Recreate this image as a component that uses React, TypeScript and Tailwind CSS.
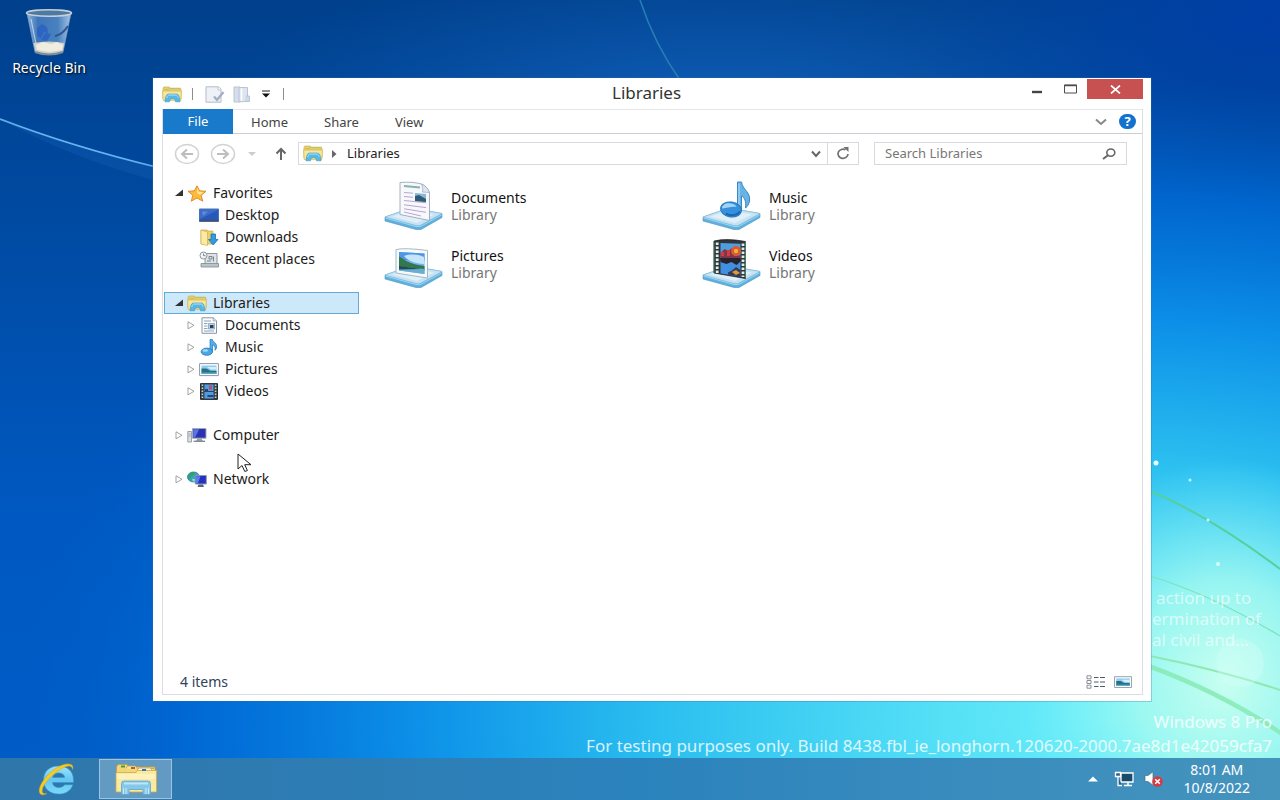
import React from 'react';

type IconProps = { className?: string };

interface TreeItem {
  label: string;
  icon: React.FC<IconProps>;
  level: 0 | 1;
  state: 'open' | 'closed' | 'none';
  selected?: boolean;
  spaced?: boolean;
}

interface LibraryItem {
  label: string;
  icon: React.FC<IconProps>;
}

/* ---------- Small icons ---------- */

const ExplorerIcon: React.FC<IconProps> = ({ className }) => (
  <svg viewBox="0 0 20 17" className={className} aria-hidden="true">
    <path d="M1 2.5 1.8 1h5.4l1 1.2h10.3l.5 1V13H1z" fill="#e9cf6e" stroke="#cfae4a" strokeWidth=".7" />
    <path d="M2.5 3.6h4l.8-1h10.6" fill="none" stroke="#b9c26a" strokeWidth="1" />
    <path d="M.6 5h18.8l-.6 9.6H1.2z" fill="#f8e79a" stroke="#d3b552" strokeWidth=".7" />
    <path d="M3 15.800c.3-5.200 1.600-7.800 3.600-7.800h7.800c2 0 3.300 2.600 3.600 7.800h-4.400c-.2-2-1-3-3.100-3s-2.900 1-3.100 3z" fill="#56b8e4" stroke="#3a95c6" strokeWidth=".6" />
    <path d="M4.800 12c.5-2.100 1.200-3 2.200-3h7c1 0 1.700.9 2.100 2.700" fill="none" stroke="#b5e4f7" strokeWidth="1" />
  </svg>
);

const PropertiesIcon: React.FC<IconProps> = ({ className }) => (
  <svg viewBox="0 0 20 17" className={className} aria-hidden="true">
    <path d="M1 .8h12.500l2.500 2.400v13H1z" fill="#eef1f7" stroke="#b3bccb" />
    <path d="M13 1v3h3" fill="#fff" stroke="#b3bccb" strokeWidth=".8" />
    <path d="m9 10.500 3 3.500 6.500-8" fill="none" stroke="#a4b0c2" strokeWidth="2.400" />
  </svg>
);

const NewFolderIcon: React.FC<IconProps> = ({ className }) => (
  <svg viewBox="0 0 18 17" className={className} aria-hidden="true">
    <path d="M1 1h6v15H1z" fill="#d5deea" stroke="#b9c5d4" />
    <path d="M6 1.500h8.500V15L6 16z" fill="#dde5ef" stroke="#b9c5d4" />
    <path d="M8.500 2.500v12" stroke="#fff" strokeWidth="1.500" />
    <path d="M13 10h3.500v5.500H12" fill="#cfd9e6" stroke="#b0bdce" strokeWidth=".8" />
  </svg>
);

const StarIcon: React.FC<IconProps> = ({ className }) => (
  <svg viewBox="0 0 20 17" className={className} aria-hidden="true">
    <path d="m10 .8 2.600 5 6.400.5-4.800 4 1.600 5.900L10 13l-5.800 3.200 1.600-5.900L1 6.300l6.400-.5z" fill="#fcb93c" stroke="#dc8628" strokeWidth=".9" />
    <path d="m10 2.500 1.800 4.200 4.700.4-3.500 2.900L10 8z" fill="#ffe48a" />
  </svg>
);

const DesktopIcon: React.FC<IconProps> = ({ className }) => (
  <svg viewBox="0 0 20 17" className={className} aria-hidden="true">
    <path d="M.5 2h19v12.500H.5z" fill="#3d6cc9" stroke="#4a72b4" />
    <path d="M1 12 19 3v10H1z" fill="#2858b8" />
    <path d="M3 4.500h6L4 9z" fill="#5c8ae0" />
    <path d="M.5 13.500h19" stroke="#454f66" strokeWidth="1.500" />
  </svg>
);

const DownloadsIcon: React.FC<IconProps> = ({ className }) => (
  <svg viewBox="0 0 20 17" className={className} aria-hidden="true">
    <path d="M2 1h6l1 1h5v13H2z" fill="#ecd06c" stroke="#caa848" strokeWidth=".7" />
    <path d="m2 1 6.500 2v13.500L2 15z" fill="#faeaa4" stroke="#d0b050" strokeWidth=".7" />
    <path d="M12 5h4.500v5.500H19l-4.800 5.500-4.700-5.500H12z" fill="#2f9be0" stroke="#1873b4" strokeWidth=".8" />
  </svg>
);

const RecentIcon: React.FC<IconProps> = ({ className }) => (
  <svg viewBox="0 0 20 17" className={className} aria-hidden="true">
    <path d="M4 2.500h14v11H6V7z" fill="#dde3e6" stroke="#8b969c" />
    <path d="M2 12.500h17.500v3.500H2z" fill="#b9c3c8" stroke="#7f8b91" strokeWidth=".8" />
    <circle cx="4.500" cy="4.500" r="3.500" fill="#f4f7f8" stroke="#8b969c" />
    <path d="M4.500 2.500v2.200h2M10 5.500h3v2.500h-3zm4.500 0v5M8 10h4" fill="none" stroke="#76848b" />
  </svg>
);

const DocumentIcon: React.FC<IconProps> = ({ className }) => (
  <svg viewBox="0 0 20 17" className={className} aria-hidden="true">
    <path d="M3 .8h11.500L17.500 4v12.300H3z" fill="#fbfcfe" stroke="#8896a5" />
    <path d="M14.200.8V4h3.300" fill="#dbe4ee" stroke="#8896a5" strokeWidth=".7" />
    <path d="M5 4h7M5 6.500h3.500M5 9h3.500M5 11.500h3.500M5 14h10" stroke="#8ba4ba" />
    <path d="M9.500 6.500h6V12h-6z" fill="#b8cfe4" stroke="#6f8ba5" strokeWidth=".6" />
    <path d="M11 8h3.500v3H11z" fill="#24415f" />
  </svg>
);

const NoteIcon: React.FC<IconProps> = ({ className }) => (
  <svg viewBox="0 0 20 17" className={className} aria-hidden="true">
    <path d="M11 .5h2.500c.3 2.600 5 3.500 4 8.500-.2 1-.8 1.800-1.600 2.300.8-3-.3-4.600-2.400-5.500v7H11z" fill="#53afe8" stroke="#2479b8" strokeWidth=".7" />
    <ellipse cx="7.800" cy="12.700" rx="5.700" ry="3.600" fill="#49a7e6" stroke="#2274b4" strokeWidth=".8" />
    <ellipse cx="6.300" cy="11.500" rx="2.800" ry="1.300" fill="#a0daf8" />
  </svg>
);

const PictureIcon: React.FC<IconProps> = ({ className }) => (
  <svg viewBox="0 0 20 17" className={className} aria-hidden="true">
    <path d="M.6 2.600h18.800v12H.6z" fill="#fff" stroke="#8b99a5" />
    <path d="M2.500 4.500h15v8.200h-15z" fill="#8ccdf0" />
    <path d="M2.500 7.500h5l4 2.200h6v3h-15z" fill="#2b6f86" />
    <path d="M8 6h9.500v2.500H12z" fill="#d6effa" />
    <path d="M2.500 11.500h15v1.300h-15z" fill="#5fb0cc" />
  </svg>
);

const FilmIcon: React.FC<IconProps> = ({ className }) => (
  <svg viewBox="0 0 20 17" className={className} aria-hidden="true">
    <path d="M1.500.6h17v15.800h-17z" fill="#3a4149" stroke="#252a30" />
    <path d="M5.500 1.500h9v6.500h-9zM5.500 9h9v6.500h-9z" fill="#4f9be4" />
    <path d="M10 2.500h3v4h-3z" fill="#b8506a" />
    <path d="M6 6h3v2H6zM8.500 12h6v2h-6z" fill="#27437f" />
    <path d="M3.400 1.500v14M16.600 1.500v14" stroke="#b9d2c8" strokeWidth="1.600" strokeDasharray="1.500 1.500" />
  </svg>
);

const ComputerIcon: React.FC<IconProps> = ({ className }) => (
  <svg viewBox="0 0 20 17" className={className} aria-hidden="true">
    <path d="M.8 4.500h3.700v10.500H.8z" fill="#dde1e4" stroke="#858e95" strokeWidth=".8" />
    <path d="M1.700 7h2M1.700 9h2" stroke="#7d878e" strokeWidth=".7" />
    <path d="M5.500 1.500H19v9.700H5.500z" fill="#2a31b4" stroke="#a2aab4" />
    <path d="M6.200 2.300h6L8 10.500H6.200z" fill="#5a75e6" />
    <path d="M10.500 11.500h4l1.500 3H8.500z" fill="#9aa2aa" />
    <path d="M6.500 14.300h11.500" stroke="#7c858d" strokeWidth="1.300" />
  </svg>
);

const NetworkIcon: React.FC<IconProps> = ({ className }) => (
  <svg viewBox="0 0 20 17" className={className} aria-hidden="true">
    <ellipse cx="6.500" cy="6" rx="6" ry="5" fill="#35a4c4" stroke="#217a94" strokeWidth=".8" />
    <path d="M2 4c1.500-2.500 4-3 6-2.500L7 4 4 5.500l-.5 3L1.600 7z" fill="#35a35d" />
    <path d="M5 8h4l-1.500 2.500H6z" fill="#8be1c8" />
    <path d="M8.300 4.500h11v8.500h-11z" fill="#2330c0" stroke="#8d98ac" />
    <path d="M9 5.200h4.500l-2.500 7H9z" fill="#5d7af0" />
    <path d="M11.500 13.500h4.500l1 2.500h-6.500z" fill="#5a6378" />
  </svg>
);

/* ---------- Large library icons ---------- */

const Tray: React.FC = () => (
  <g>
    <path d="M1 36 27 27l31 5.500v4L37 48.500h-5L1 40z" fill="#5fb0de" stroke="#4a93bf" strokeWidth=".6" />
    <path d="M1 36 27 27l31 5.500-22 12h-4z" fill="#c6e2f3" stroke="#8bc1de" strokeWidth=".6" />
    <path d="m8 35.500 20-6.500 22 4.500-17 8.500z" fill="#e0f0f9" />
    <path d="m1.500 37 30.500 8.500h4.500L57.500 34" fill="none" stroke="#9bd6f2" />
  </g>
);

const DocumentsLibraryIcon: React.FC<IconProps> = ({ className }) => (
  <svg viewBox="0 0 60 50" className={className} aria-hidden="true">
    <Tray />
    <path d="M16 1.500c9-.8 16 0 21.500 1.500 3.500 1.500 6.500 4.500 8 8.500V39.500L16 33.500z" fill="#f8f7fc" stroke="#9aa8b6" strokeWidth=".9" />
    <path d="M37.500 3c1.300 2.500 1.500 5 1 8l7 .5C44 7 41 4.500 37.500 3z" fill="#dce6ee" stroke="#9aabb8" strokeWidth=".7" />
    <path d="m20 5 16 1.500" stroke="#84b5a9" strokeWidth="1.800" />
    <path d="m20 11.500 9 .7m-9 3.300 9 .8m-9 3.200 22 2.200m-22 2.100 22 2.800m-22 1.200 22 3.500M20 31l17 4" stroke="#b5a7cd" strokeWidth="1" />
    <path d="m31 12 11 .9v8L31 20z" fill="#8ab9d8" />
    <path d="m31 15 4-1 7 4v3L31 20z" fill="#315a76" />
  </svg>
);

const MusicLibraryIcon: React.FC<IconProps> = ({ className }) => (
  <svg viewBox="0 0 60 50" className={className} aria-hidden="true">
    <Tray />
    <path d="M35.500 1h4c1 8 9.500 10 8 19-.5 3-2 5.500-4 7 .8-7-1-10.500-4-12v15h-4z" fill="#66b3e6" stroke="#3c87c2" />
    <path d="M37 2.500v26" stroke="#b5e0f8" strokeWidth="1" />
    <ellipse cx="29" cy="28.500" rx="10.500" ry="7.500" fill="#3690dc" stroke="#2678bd" transform="rotate(8 29 28.500)" />
    <path d="M20 27.500c0-4 4-6 9-5 4 .8 5 2 5.500 3.500-5-1-8.500 1-14.500 1.500z" fill="#9ed5f5" />
    <path d="M24 32.500c5 3 11 2 14-2" fill="none" stroke="#1766ae" strokeWidth="2" />
  </svg>
);

const PicturesLibraryIcon: React.FC<IconProps> = ({ className }) => (
  <svg viewBox="0 0 60 50" className={className} aria-hidden="true">
    <Tray />
    <path d="M12 10.500q9-2 31.500 1V39l-31.500-5z" fill="#f6fafd" stroke="#9eb0bd" strokeWidth=".9" />
    <path d="m15 13 25.500 1.500v20.500L15 31.500z" fill="#70b5eb" />
    <path d="m15 13 25.500 1.500v7c-8 2-15-2-25.500 0z" fill="#4f97e2" />
    <path d="M20 17c6-2 13-2 20 1v7c-9 0-17-4-20-8z" fill="#c6e5fa" />
    <path d="M15 17.500c6 3 8 7 25.500 9.500v4.500L15 28.500z" fill="#35774c" />
    <path d="m15 27.500 25.500 2.500v5L15 31.500z" fill="#69add1" />
    <path d="m15 27 22 3-22 .5z" fill="#1f4d59" />
  </svg>
);

const VideosLibraryIcon: React.FC<IconProps> = ({ className }) => (
  <svg viewBox="0 0 60 50" className={className} aria-hidden="true">
    <Tray />
    <path d="M12 2q13-3 31.500.5V39.500L12 34z" fill="#30353b" stroke="#20252a" strokeWidth=".8" />
    <path d="m18.500 4 20 .8V20l-20-1z" fill="#4f9ee0" />
    <path d="m18.500 21 20 1v15.500l-20-3z" fill="#408fe0" />
    <path d="m18.500 14 4-4 4 2 3-3 3 8 6-1v4l-20-1z" fill="#81354a" />
    <circle cx="34" cy="12" r="5" fill="#db5a2c" />
    <circle cx="34" cy="12" r="2.200" fill="#f5ac48" />
    <path d="M19 13h3v4h-3zM25 11h3v6h-3z" fill="#d33c3e" />
    <path d="M18.500 19h20v3.500l-4 3.500-5-3-5 2-6-2z" fill="#29222c" />
    <path d="m26 33.500 4-2 4-3.500 4.500 3v6.500l-12.500-2z" fill="#353a5c" />
    <path d="m30 33 4-2 4 3-4 2z" fill="#e09b30" />
    <path d="M15.200 3.500v30.500M41 4.500v33.500" stroke="#dcefe4" strokeWidth="2.800" strokeDasharray="2.500 1.500" />
    <path d="M12 2.500v31.500M43.500 2.500v36.500" stroke="#4f8b6c" strokeWidth=".8" />
  </svg>
);

/* ---------- Desktop and taskbar icons ---------- */

const RecycleBinIcon: React.FC<IconProps> = ({ className }) => (
  <svg viewBox="0 0 48 50" className={className} aria-hidden="true">
    <defs>
      <linearGradient id="binGlass" x1="0" x2="1">
        <stop offset="0" stopColor="#a9c9e8" stopOpacity=".85" />
        <stop offset=".25" stopColor="#4c82c4" stopOpacity=".8" />
        <stop offset=".7" stopColor="#5c92cc" stopOpacity=".8" />
        <stop offset="1" stopColor="#bcd6ee" stopOpacity=".9" />
      </linearGradient>
    </defs>
    <path d="m2 5 8 39q14 5 28 0l8-39z" fill="url(#binGlass)" stroke="#7d9fc2" strokeWidth=".8" />
    <path d="m8.500 35 2 9.500q13.500 4.500 27 0l2-9.500q-16-3-31 0z" fill="#cfd1cd" />
    <path d="m11 37 7-3 8 2 6-2 6 3-1 5-13 2-12-2z" fill="#efece0" />
    <path d="M10 44q14 5 28 0" fill="none" stroke="#7f8c9a" strokeWidth="2" />
    <ellipse cx="24" cy="5" rx="22.500" ry="3.200" fill="#50799f" stroke="#c3d0dc" strokeWidth="1.500" />
    <path d="m12 20 5-4 5 3 1 6-4-1-3 6-4-2zM20 25l6 1-4 7-6-1z" fill="#2a62c4" opacity=".85" />
    <path d="M43 18q-6 9-13 10" fill="none" stroke="#2d568e" strokeWidth="2" />
    <path d="m6 11 5 25" stroke="#d6e6f4" strokeWidth="1.200" opacity=".7" />
  </svg>
);

const BrowserIcon: React.FC<IconProps> = ({ className }) => (
  <svg viewBox="0 0 38 34" className={className} aria-hidden="true">
    <defs>
      <linearGradient id="browserBlue" x1="0" y1="0" x2="0" y2="1">
        <stop offset="0" stopColor="#9de3fb" />
        <stop offset=".5" stopColor="#63c6f3" />
        <stop offset="1" stopColor="#7bdaf8" />
      </linearGradient>
    </defs>
    <path
      d="M20.500 4C29.500 4 35.500 9.500 35.500 18v2.500H14.500c.4 3.200 2.800 5 6.300 5 2.800 0 4.600-1 5.700-2.800h8.400C33 28.500 28 32 20.700 32 11.600 32 5.500 26.600 5.500 18S11.600 4 20.500 4zm-6 11.500h12.200c-.5-3-2.700-4.600-6-4.600s-5.500 1.600-6.200 4.600z"
      fill="url(#browserBlue)"
      fillRule="evenodd"
      stroke="#3595c8"
      strokeWidth=".6"
    />
    <path d="M34.500 7.500c.8-2.500.3-4.300-1.600-5C27-.1 16 6 8.500 14.500 1.600 22.300-.6 30 2.800 32.200c1.500 1 3.600.7 6.200-.7-2.500.5-4.200 0-4.700-1.600-.9-3.400 2.800-9.600 8.900-15.400C20.600 7.500 28.700 3 32.500 4.300c1 .4 1.700 1.400 2 3.200z" fill="#f5cb25" stroke="#d9a418" strokeWidth=".5" />
  </svg>
);

const FolderStackIcon: React.FC<IconProps> = ({ className }) => (
  <svg viewBox="0 0 42 32" className={className} aria-hidden="true">
    <path d="M1.500 4 3 1.500h9L13.500 4H40v24H1.500z" fill="#f0d778" stroke="#c59e41" strokeWidth=".8" />
    <path d="M11 5.500 12.500 3h8l1.500 2.500h17" fill="#f7e69b" stroke="#c8a349" strokeWidth=".8" />
    <path d="M22 7.500 24 5h11.500L37 7.500" fill="#fff6d4" stroke="#bca369" strokeWidth=".8" />
    <path d="M1 9.500h20l1.500-2h19V29H1z" fill="#fae9a0" stroke="#d0a94a" strokeWidth=".8" />
    <path d="M2 11h38v5H2z" fill="#fdf2bd" />
    <path d="M6 2.500h4v2H6z" fill="#3f9e50" />
    <path d="M16 4h4v2h-4z" fill="#c0573d" />
    <path d="M27 6h4v2h-4z" fill="#3872b8" />
    <path d="M6.500 31.500V20.500q0-2.500 2.500-2.500h24q2.500 0 2.500 2.500v11h-7.500v-5H14v5z" fill="#86c8ea" stroke="#5ba6d3" strokeWidth=".8" />
    <path d="M9 20.500h24" stroke="#bfe5f7" strokeWidth="2" />
    <path d="M8.500 25v6m2.500-6v6m20-6v6m2.500-6v6" stroke="#d3effa" strokeWidth=".8" />
  </svg>
);

const NetworkTrayIcon: React.FC<IconProps> = ({ className }) => (
  <svg viewBox="0 0 20 16" className={className} aria-hidden="true">
    <path d="M7 2h12v9H7z" fill="#1c4a6a" stroke="#fff" strokeWidth="1.300" />
    <path d="M10 14.500h8M14 11v3" stroke="#fff" strokeWidth="1.500" />
    <path d="M1.500 1.500h5v4h-5zM4 5.500v9h4" fill="#2c5f85" stroke="#fff" strokeWidth="1.300" />
  </svg>
);

const VolumeTrayIcon: React.FC<IconProps> = ({ className }) => (
  <svg viewBox="0 0 20 16" className={className} aria-hidden="true">
    <path d="M1 4.500h3L9 .8v13.400L4 10.500H1z" fill="#fff" stroke="#506f84" strokeWidth=".7" />
    <circle cx="13.500" cy="10.500" r="5.200" fill="#d8393f" />
    <path d="m11.200 8.200 4.600 4.600m0-4.600-4.600 4.600" stroke="#fff" strokeWidth="1.600" />
  </svg>
);

const DetailsViewIcon: React.FC<IconProps> = ({ className }) => (
  <svg viewBox="0 0 20 14" className={className} aria-hidden="true">
    <path d="M1 .8h4v3H1zm0 4.700h4v3H1zm0 4.700h4v3H1z" fill="#fff" stroke="#7b858e" strokeWidth=".9" />
    <path d="M8 2.500h4.500m1.500 0h5M8 7h4.500M14 7h5M8 11.500h4.500m1.500 0h5" stroke="#4d5a66" />
  </svg>
);

/* ---------- Data ---------- */

const treeItems: TreeItem[] = [
  { label: 'Favorites', icon: StarIcon, level: 0, state: 'open' },
  { label: 'Desktop', icon: DesktopIcon, level: 1, state: 'none' },
  { label: 'Downloads', icon: DownloadsIcon, level: 1, state: 'none' },
  { label: 'Recent places', icon: RecentIcon, level: 1, state: 'none' },
  { label: 'Libraries', icon: ExplorerIcon, level: 0, state: 'open', selected: true, spaced: true },
  { label: 'Documents', icon: DocumentIcon, level: 1, state: 'closed' },
  { label: 'Music', icon: NoteIcon, level: 1, state: 'closed' },
  { label: 'Pictures', icon: PictureIcon, level: 1, state: 'closed' },
  { label: 'Videos', icon: FilmIcon, level: 1, state: 'closed' },
  { label: 'Computer', icon: ComputerIcon, level: 0, state: 'closed', spaced: true },
  { label: 'Network', icon: NetworkIcon, level: 0, state: 'closed', spaced: true },
];

const libraries: LibraryItem[] = [
  { label: 'Documents', icon: DocumentsLibraryIcon },
  { label: 'Music', icon: MusicLibraryIcon },
  { label: 'Pictures', icon: PicturesLibraryIcon },
  { label: 'Videos', icon: VideosLibraryIcon },
];

/* ---------- Sections ---------- */

const Wallpaper: React.FC = () => (
  <svg viewBox="0 0 1280 800" preserveAspectRatio="none" className="absolute inset-0 w-full h-full" aria-hidden="true">
    <defs>
      <linearGradient id="skyBase" x1="0" y1="0" x2="0" y2="1">
        <stop offset="0" stopColor="#00408c" />
        <stop offset=".3" stopColor="#004ba4" />
        <stop offset=".65" stopColor="#0059c2" />
        <stop offset="1" stopColor="#005cc8" />
      </linearGradient>
      <radialGradient id="skyGlow" gradientUnits="userSpaceOnUse" cx="0" cy="0" r="1" gradientTransform="translate(1110 720) scale(1120 640)">
        <stop offset="0" stopColor="#6cf0fa" />
        <stop offset=".15" stopColor="#55e0f6" />
        <stop offset=".4" stopColor="#2cc0f0" />
        <stop offset=".62" stopColor="#0c90e8" />
        <stop offset=".82" stopColor="#006cd8" stopOpacity=".8" />
        <stop offset="1" stopColor="#0058c0" stopOpacity="0" />
      </radialGradient>
      <radialGradient id="skyTop" gradientUnits="userSpaceOnUse" cx="0" cy="0" r="1" gradientTransform="translate(720 140) scale(520 200)">
        <stop offset="0" stopColor="#1466bf" />
        <stop offset="1" stopColor="#0c58b0" stopOpacity="0" />
      </radialGradient>
      <radialGradient id="skyCorner" gradientUnits="userSpaceOnUse" cx="0" cy="0" r="1" gradientTransform="translate(1270 20) scale(360 190)">
        <stop offset="0" stopColor="#003ea6" />
        <stop offset="1" stopColor="#0048b0" stopOpacity="0" />
      </radialGradient>
      <radialGradient id="skyMint" gradientUnits="userSpaceOnUse" cx="0" cy="0" r="1" gradientTransform="translate(1225 680) scale(200 220)">
        <stop offset="0" stopColor="#c8fff0" />
        <stop offset=".45" stopColor="#a4faf0" stopOpacity=".85" />
        <stop offset="1" stopColor="#80f0f8" stopOpacity="0" />
      </radialGradient>
    </defs>
    <path d="M0 0h1280v800H0z" fill="url(#skyBase)" />
    <path d="M0 0h1280v800H0z" fill="url(#skyTop)" />
    <path d="M0 0h1280v800H0z" fill="url(#skyCorner)" />
    <path d="M0 0h1280v800H0z" fill="url(#skyGlow)" />
    <path d="M0 0h1280v800H0z" fill="url(#skyMint)" />
    <path d="M0 119Q70 146 160 168" fill="none" stroke="#63b4f2" strokeWidth="1.800" />
    <path d="M0 119Q70 158 160 182V168Q70 148 0 119z" fill="#1a66bd" opacity=".25" />
    <path d="M640 0q15 45 40 80" fill="none" stroke="#2680b4" strokeWidth="1.500" />
    <path d="M1150 491q60 25 130 78" fill="none" stroke="#55cf9c" strokeWidth="2" />
    <path d="M1150 576q60 18 130 60" fill="none" stroke="#7be3bd" strokeWidth="1.300" />
    <path d="M1150 656q70 14 130 34" fill="none" stroke="#8fe8b4" strokeWidth="2" />
    <path d="M1150 664q75 28 130 66v5q-60-40-130-66z" fill="#83e9b0" opacity=".8" />
    <circle cx="1240" cy="663" r="24" fill="#d8fff8" opacity=".35" />
    <circle cx="1156" cy="463" r="2.500" fill="#eaffff" />
    <circle cx="1190" cy="480" r="1.500" fill="#c5f7ff" />
    <circle cx="1208" cy="520" r="1.500" fill="#c5f7ff" />
    <circle cx="1218" cy="564" r="2" fill="#d8fcff" />
  </svg>
);

const TitleBar: React.FC = () => (
  <header className="flex h-[31px] shrink-0">
    <div className="flex w-[450px] items-center pt-px">
      <ExplorerIcon className="w-5 h-[17px]" />
      <span className="ml-2.5 h-3 w-px bg-[#8c8c8c]" />
      <button aria-label="Properties" className="ml-3">
        <PropertiesIcon className="w-5 h-[17px]" />
      </button>
      <button aria-label="New folder" className="ml-2">
        <NewFolderIcon className="w-[18px] h-[17px]" />
      </button>
      <button aria-label="Customize toolbar" className="ml-2.5">
        <svg viewBox="0 0 10 8" className="w-2.5 h-2" aria-hidden="true">
          <path d="M1 1h8" stroke="#222" />
          <path d="M1 3.500h8L5 7.500z" fill="#111" />
        </svg>
      </button>
      <span className="ml-3 h-3 w-px bg-[#8c8c8c]" />
    </div>
    <h1 className="text-[17px] leading-[30px] text-[#333]">Libraries</h1>
    <div className="flex flex-1 items-start justify-end">
      <button aria-label="Minimize" className="w-8 h-5 flex items-center justify-center">
        <svg viewBox="0 0 10 14" className="w-2.5 h-3.5" aria-hidden="true">
          <path d="M0 11h10" stroke="#444" strokeWidth="2.400" />
        </svg>
      </button>
      <button aria-label="Maximize" className="w-[34px] h-[22px] flex items-center justify-center">
        <svg viewBox="0 0 13 10" className="w-[13px] h-2.5" aria-hidden="true">
          <path d="M.5 1h12v8H.5z" fill="none" stroke="#4c4c52" />
          <path d="M0 1.500h13" stroke="#4c4c52" strokeWidth="1.500" />
        </svg>
      </button>
      <button aria-label="Close" className="mt-px w-14 h-5 bg-[#c75050] flex items-center justify-center">
        <svg viewBox="0 0 11 9" className="w-[11px] h-[9px]" aria-hidden="true">
          <path d="m1 .5 9 8m0-8-9 8" stroke="#fff" strokeWidth="1.700" />
        </svg>
      </button>
    </div>
  </header>
);

const RibbonTabs: React.FC = () => (
  <nav className="flex h-[25px] shrink-0 items-stretch border-t border-[#e4e6e8] border-b border-b-[#c8ced6] text-[13px]">
    <button className="-my-px w-[70px] bg-[#1979ca] text-white">File</button>
    {['Home', 'Share', 'View'].map((tab) => (
      <button key={tab} className="px-[18px] pt-px text-[#444]">
        {tab}
      </button>
    ))}
    <div className="ml-auto flex items-center gap-3 pr-1.5">
      <button aria-label="Minimize the Ribbon">
        <svg viewBox="0 0 12 8" className="w-3 h-2" aria-hidden="true">
          <path d="m1 1.500 5 4.500 5-4.500" fill="none" stroke="#888" strokeWidth="2" />
        </svg>
      </button>
      <button aria-label="Help" className="w-[17px] h-[15px] rounded-full bg-[#1372ce] text-white text-[13px] leading-[15px] font-bold">
        ?
      </button>
    </div>
  </nav>
);

const NavArrow: React.FC<{ label: string; path: string }> = ({ label, path }) => (
  <button aria-label={label}>
    <svg viewBox="0 0 26 22" className="w-[26px] h-[22px]" aria-hidden="true">
      <ellipse cx="13" cy="11" rx="11.500" ry="9.500" fill="#fff" stroke="#d2d2d2" strokeWidth="1.500" />
      <path d={path} fill="none" stroke="#bdbdbd" strokeWidth="2" />
    </svg>
  </button>
);

const AddressRow: React.FC = () => (
  <div className="flex shrink-0 items-center pt-2 pl-[11px] pr-[15px] text-[13px]">
    <div className="flex items-center gap-2.5">
      <NavArrow label="Back" path="M19 11H8m5-4.500L8 11l5 4.500" />
      <NavArrow label="Forward" path="M7 11h11m-5-4.500 5 4.500-5 4.500" />
    </div>
    <button aria-label="Recent locations" className="ml-3">
      <svg viewBox="0 0 8 6" className="w-2 h-1.5" aria-hidden="true">
        <path d="M0 1h8L4 5z" fill="#ccc" />
      </svg>
    </button>
    <button aria-label="Up" className="ml-[18px]">
      <svg viewBox="0 0 14 14" className="w-3.5 h-3.5" aria-hidden="true">
        <path d="M7 13V2M2.500 6.500 7 2l4.500 4.500" fill="none" stroke="#666" strokeWidth="2" />
      </svg>
    </button>
    <div className="ml-2.5 flex h-[23px] flex-1 items-center border border-[#d9d9d9] pl-1">
      <ExplorerIcon className="w-5 h-[17px]" />
      <svg viewBox="0 0 6 8" className="ml-2 w-1.5 h-2" aria-hidden="true">
        <path d="M1 0v8l4.500-4z" fill="#666" />
      </svg>
      <button className="ml-2.5 text-[#222]">Libraries</button>
      <button aria-label="Previous locations" className="ml-auto w-6 h-full flex items-center justify-center border-r border-[#d9d9d9]">
        <svg viewBox="0 0 10 8" className="w-2.5 h-2" aria-hidden="true">
          <path d="m1 1.500 4 4.500 4-4.500" fill="none" stroke="#666" strokeWidth="2" />
        </svg>
      </button>
      <button aria-label="Refresh" className="w-[30px] h-full flex items-center justify-center">
        <svg viewBox="0 0 14 13" className="w-3.5 h-[13px]" aria-hidden="true">
          <path d="M9.500 2.800A5 4.600 0 1 0 12 7" fill="none" stroke="#707070" strokeWidth="1.700" />
          <path d="M7.500 0h5v5z" fill="#707070" />
        </svg>
      </button>
    </div>
    <div className="ml-[15px] flex h-[23px] w-[253px] items-center border border-[#d9d9d9] px-2.5">
      <input
        type="text"
        aria-label="Search Libraries"
        placeholder="Search Libraries"
        className="min-w-0 flex-1 bg-transparent outline-none placeholder:text-[#777]"
      />
      <svg viewBox="0 0 14 12" className="w-3.5 h-3" aria-hidden="true">
        <ellipse cx="8.800" cy="4.600" rx="4" ry="3.600" fill="none" stroke="#666" strokeWidth="1.600" />
        <path d="M6 7.200 1 11" stroke="#666" strokeWidth="2" />
      </svg>
    </div>
  </div>
);

const Expander: React.FC<{ state: TreeItem['state'] }> = ({ state }) => (
  <svg viewBox="0 0 8 9" className="w-2 h-[9px] shrink-0" aria-hidden="true">
    {state === 'open' && <path d="M8 .5v6.500H0z" fill="#333" />}
    {state === 'closed' && <path d="M1 .8v7l6-3.500z" fill="#fff" stroke="#999" strokeWidth=".9" />}
  </svg>
);

const TreeRow: React.FC<{ item: TreeItem }> = ({ item }) => {
  const Icon = item.icon;
  return (
    <li className={item.spaced ? 'mt-[22px]' : ''}>
      <button
        className={`flex h-[22px] w-full items-center border text-left ${item.level === 1 ? 'pl-[22px]' : 'pl-2.5'} ${
          item.selected ? 'border-[#62aad8] bg-[#cde8f8]' : 'border-transparent'
        }`}
      >
        <Expander state={item.state} />
        <Icon className="ml-1 w-5 h-[17px] shrink-0" />
        <span className="ml-1.5">{item.label}</span>
      </button>
    </li>
  );
};

const ExplorerWindow: React.FC = () => (
  <section className="absolute top-[78px] bottom-[57px] left-[153px] right-[129px] flex flex-col bg-white pl-[9px] pr-2 pb-1.5 ring-1 ring-[#2a6fb0]/30">
    <TitleBar />
    <div className="flex min-h-0 flex-1 flex-col border-x border-b border-[#dcdfe2]">
      <RibbonTabs />
      <AddressRow />
      <main className="flex min-h-0 flex-1 items-start pt-4">
        <ul className="ml-px mt-px w-[195px] shrink-0 text-[#1c1c1c]">
          {treeItems.map((item) => (
            <TreeRow key={item.label} item={item} />
          ))}
        </ul>
        <div className="ml-[25px] grid flex-1 grid-cols-[318px_1fr] gap-y-2">
          {libraries.map(({ label, icon: Icon }) => (
            <button key={label} className="flex h-[50px] items-center text-left leading-[17px]">
              <Icon className="w-[60px] h-[50px]" />
              <span className="ml-[7px]">
                <span className="block text-[#111]">{label}</span>
                <span className="block text-[#777]">Library</span>
              </span>
            </button>
          ))}
        </div>
      </main>
      <footer className="flex h-[25px] shrink-0 items-center pl-[17px] pr-2.5 text-[#33415c]">
        <span>4 items</span>
        <button aria-label="Details view" className="ml-auto">
          <DetailsViewIcon className="w-5 h-3.5" />
        </button>
        <button aria-label="Large icons view" className="ml-2">
          <PictureIcon className="w-[18px] h-4" />
        </button>
      </footer>
    </div>
  </section>
);

const Taskbar: React.FC = () => (
  <footer className="relative flex h-[42px] items-stretch bg-gradient-to-r from-[#2f76aa] via-[#2b83bd] to-[#4594bd] text-white">
    <button aria-label="Internet Explorer" className="ml-[37px] px-px">
      <BrowserIcon className="w-[38px] h-[34px]" />
    </button>
    <button aria-label="File Explorer" className="ml-[22px] my-px w-[73px] flex items-center justify-center border border-[#9cc4e0] bg-white/25">
      <FolderStackIcon className="w-[42px] h-8" />
    </button>
    <div className="ml-auto flex items-center pr-[30px]">
      <button aria-label="Show hidden icons">
        <svg viewBox="0 0 10 6" className="w-2.5 h-1.5" aria-hidden="true">
          <path d="M0 5.500h10L5 .5z" fill="#fff" />
        </svg>
      </button>
      <button aria-label="Network" className="ml-4">
        <NetworkTrayIcon className="w-5 h-4" />
      </button>
      <button aria-label="Volume muted" className="ml-2.5">
        <VolumeTrayIcon className="w-5 h-4" />
      </button>
      <time className="ml-5 text-center leading-[18px]">
        8:01 AM
        <br />
        10/8/2022
      </time>
    </div>
  </footer>
);

const App: React.FC = () => {
  return (
    <div className="relative flex h-screen flex-col overflow-hidden bg-[#0059c2] font-['Noto_Sans','Open_Sans',sans-serif] text-sm">
      <Wallpaper />
      <div className="relative min-h-0 flex-1">
        <button className="mt-2 ml-1.5 flex w-[86px] flex-col items-center text-white [text-shadow:1px_1px_2px_#000]">
          <RecycleBinIcon className="w-12 h-[50px]" />
          <span className="leading-5">Recycle Bin</span>
        </button>

        {/* Notice and build text printed on the desktop */}
        <p className="absolute bottom-[108px] left-[1152px] whitespace-nowrap text-[17px] leading-[21px] text-white/60">
          <span className="pl-1">action up to</span>
          <br />
          ermination of
          <br />
          al civil and...
        </p>
        <p className="absolute bottom-0 right-2 text-right whitespace-nowrap text-[17px] leading-6 text-white/80">
          Windows 8 Pro
          <br />
          For testing purposes only. Build 8438.fbl_ie_longhorn.120620-2000.7ae8d1e42059cfa7
        </p>

        <ExplorerWindow />

        {/* Mouse pointer */}
        <svg viewBox="0 0 15 20" className="absolute top-[453px] left-[237px] w-[15px] h-5" aria-hidden="true">
          <path d="M1 1v15l4-3.500 2.800 6 2.600-1-2.700-5.800H14z" fill="#fff" stroke="#222" />
        </svg>
      </div>
      <Taskbar />
    </div>
  );
};

export default App;
